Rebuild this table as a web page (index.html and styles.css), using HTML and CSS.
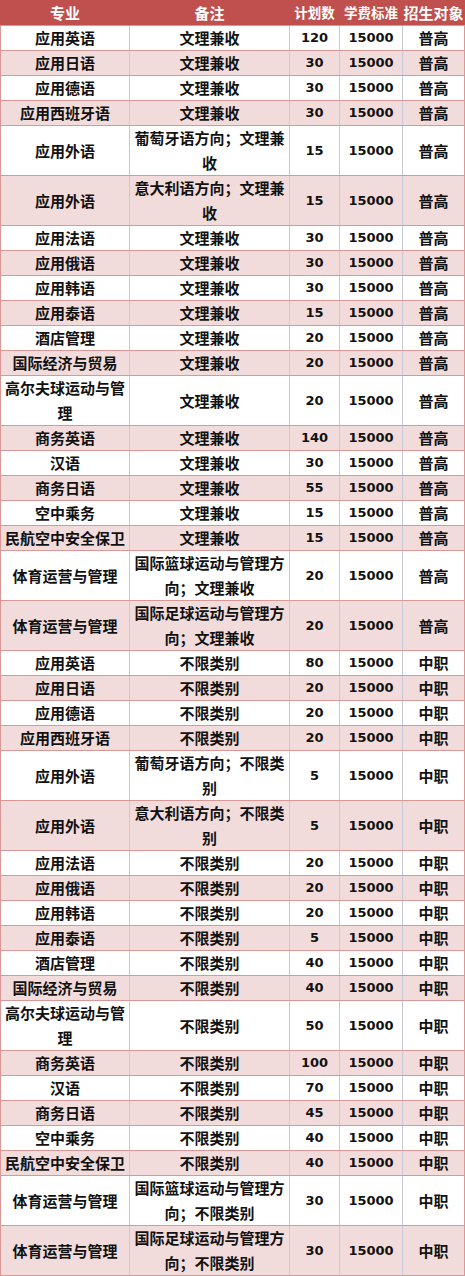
FILE: index.html
```html
<!DOCTYPE html>
<html lang="zh-CN">
<head>
<meta charset="utf-8">
<title>招生计划</title>
<link rel="stylesheet" href="styles.css">
</head>
<body>
<div class="table">
  <div class="row head">
    <div class="c">专业</div>
    <div class="c">备注</div>
    <div class="c narrow">计划数</div>
    <div class="c narrow">学费标准</div>
    <div class="c">招生对象</div>
  </div>
  <div class="rows">
    <div class="row"><div class="c">应用英语</div><div class="c">文理兼收</div><div class="c n">120</div><div class="c n">15000</div><div class="c">普高</div></div>
    <div class="row"><div class="c">应用日语</div><div class="c">文理兼收</div><div class="c n">30</div><div class="c n">15000</div><div class="c">普高</div></div>
    <div class="row"><div class="c">应用德语</div><div class="c">文理兼收</div><div class="c n">30</div><div class="c n">15000</div><div class="c">普高</div></div>
    <div class="row"><div class="c">应用西班牙语</div><div class="c">文理兼收</div><div class="c n">30</div><div class="c n">15000</div><div class="c">普高</div></div>
    <div class="row"><div class="c">应用外语</div><div class="c w">葡萄牙语方向；文理兼收</div><div class="c n">15</div><div class="c n">15000</div><div class="c">普高</div></div>
    <div class="row"><div class="c">应用外语</div><div class="c w">意大利语方向；文理兼收</div><div class="c n">15</div><div class="c n">15000</div><div class="c">普高</div></div>
    <div class="row"><div class="c">应用法语</div><div class="c">文理兼收</div><div class="c n">30</div><div class="c n">15000</div><div class="c">普高</div></div>
    <div class="row"><div class="c">应用俄语</div><div class="c">文理兼收</div><div class="c n">30</div><div class="c n">15000</div><div class="c">普高</div></div>
    <div class="row"><div class="c">应用韩语</div><div class="c">文理兼收</div><div class="c n">30</div><div class="c n">15000</div><div class="c">普高</div></div>
    <div class="row"><div class="c">应用泰语</div><div class="c">文理兼收</div><div class="c n">15</div><div class="c n">15000</div><div class="c">普高</div></div>
    <div class="row"><div class="c">酒店管理</div><div class="c">文理兼收</div><div class="c n">20</div><div class="c n">15000</div><div class="c">普高</div></div>
    <div class="row"><div class="c">国际经济与贸易</div><div class="c">文理兼收</div><div class="c n">20</div><div class="c n">15000</div><div class="c">普高</div></div>
    <div class="row"><div class="c w">高尔夫球运动与管理</div><div class="c">文理兼收</div><div class="c n">20</div><div class="c n">15000</div><div class="c">普高</div></div>
    <div class="row"><div class="c">商务英语</div><div class="c">文理兼收</div><div class="c n">140</div><div class="c n">15000</div><div class="c">普高</div></div>
    <div class="row"><div class="c">汉语</div><div class="c">文理兼收</div><div class="c n">30</div><div class="c n">15000</div><div class="c">普高</div></div>
    <div class="row"><div class="c">商务日语</div><div class="c">文理兼收</div><div class="c n">55</div><div class="c n">15000</div><div class="c">普高</div></div>
    <div class="row"><div class="c">空中乘务</div><div class="c">文理兼收</div><div class="c n">15</div><div class="c n">15000</div><div class="c">普高</div></div>
    <div class="row"><div class="c">民航空中安全保卫</div><div class="c">文理兼收</div><div class="c n">15</div><div class="c n">15000</div><div class="c">普高</div></div>
    <div class="row"><div class="c">体育运营与管理</div><div class="c w">国际篮球运动与管理方向；文理兼收</div><div class="c n">20</div><div class="c n">15000</div><div class="c">普高</div></div>
    <div class="row"><div class="c">体育运营与管理</div><div class="c w">国际足球运动与管理方向；文理兼收</div><div class="c n">20</div><div class="c n">15000</div><div class="c">普高</div></div>
    <div class="row"><div class="c">应用英语</div><div class="c">不限类别</div><div class="c n">80</div><div class="c n">15000</div><div class="c">中职</div></div>
    <div class="row"><div class="c">应用日语</div><div class="c">不限类别</div><div class="c n">20</div><div class="c n">15000</div><div class="c">中职</div></div>
    <div class="row"><div class="c">应用德语</div><div class="c">不限类别</div><div class="c n">20</div><div class="c n">15000</div><div class="c">中职</div></div>
    <div class="row"><div class="c">应用西班牙语</div><div class="c">不限类别</div><div class="c n">20</div><div class="c n">15000</div><div class="c">中职</div></div>
    <div class="row"><div class="c">应用外语</div><div class="c w">葡萄牙语方向；不限类别</div><div class="c n">5</div><div class="c n">15000</div><div class="c">中职</div></div>
    <div class="row"><div class="c">应用外语</div><div class="c w">意大利语方向；不限类别</div><div class="c n">5</div><div class="c n">15000</div><div class="c">中职</div></div>
    <div class="row"><div class="c">应用法语</div><div class="c">不限类别</div><div class="c n">20</div><div class="c n">15000</div><div class="c">中职</div></div>
    <div class="row"><div class="c">应用俄语</div><div class="c">不限类别</div><div class="c n">20</div><div class="c n">15000</div><div class="c">中职</div></div>
    <div class="row"><div class="c">应用韩语</div><div class="c">不限类别</div><div class="c n">20</div><div class="c n">15000</div><div class="c">中职</div></div>
    <div class="row"><div class="c">应用泰语</div><div class="c">不限类别</div><div class="c n">5</div><div class="c n">15000</div><div class="c">中职</div></div>
    <div class="row"><div class="c">酒店管理</div><div class="c">不限类别</div><div class="c n">40</div><div class="c n">15000</div><div class="c">中职</div></div>
    <div class="row"><div class="c">国际经济与贸易</div><div class="c">不限类别</div><div class="c n">40</div><div class="c n">15000</div><div class="c">中职</div></div>
    <div class="row"><div class="c w">高尔夫球运动与管理</div><div class="c">不限类别</div><div class="c n">50</div><div class="c n">15000</div><div class="c">中职</div></div>
    <div class="row"><div class="c">商务英语</div><div class="c">不限类别</div><div class="c n">100</div><div class="c n">15000</div><div class="c">中职</div></div>
    <div class="row"><div class="c">汉语</div><div class="c">不限类别</div><div class="c n">70</div><div class="c n">15000</div><div class="c">中职</div></div>
    <div class="row"><div class="c">商务日语</div><div class="c">不限类别</div><div class="c n">45</div><div class="c n">15000</div><div class="c">中职</div></div>
    <div class="row"><div class="c">空中乘务</div><div class="c">不限类别</div><div class="c n">40</div><div class="c n">15000</div><div class="c">中职</div></div>
    <div class="row"><div class="c">民航空中安全保卫</div><div class="c">不限类别</div><div class="c n">40</div><div class="c n">15000</div><div class="c">中职</div></div>
    <div class="row"><div class="c">体育运营与管理</div><div class="c w">国际篮球运动与管理方向；不限类别</div><div class="c n">30</div><div class="c n">15000</div><div class="c">中职</div></div>
    <div class="row"><div class="c">体育运营与管理</div><div class="c w">国际足球运动与管理方向；不限类别</div><div class="c n">30</div><div class="c n">15000</div><div class="c">中职</div></div>
  </div>
</div>
</body>
</html>
```

FILE: styles.css
```css
* { box-sizing: border-box; }
html, body { margin: 0; padding: 0; background: #ffffff; }
body {
  font-family: "Noto Sans CJK SC", "Noto Sans", sans-serif;
  font-size: 15px;
  font-weight: 700;
  color: #111111;
  width: 465px;
}
.table {
  width: 465px;
  border-bottom: 1px solid #d99795;
}
.row {
  display: grid;
  grid-template-columns: 128px 160px 50px 63px 62px;
  border-left: 1px solid #d99795;
  border-right: 1px solid #d99795;
  border-top: 1px solid #d99795;
  background: #ffffff;
}
.rows .row:nth-child(even) { background: #f2dcdb; }
.c {
  display: flex;
  align-items: center;
  justify-content: center;
  text-align: center;
  line-height: 24px;
  padding: 0 2px;
  border-left: 1px solid #c3cadb;
  min-width: 0;
}
.c:first-child { border-left: none; }
.c.w { line-height: 24.5px; padding: 0 2px; }
.c.n {
  font-family: "DejaVu Sans", "Noto Sans", sans-serif;
  font-size: 13px;
  font-weight: 700;
  padding: 0;
}
.head {
  background: #c0504d;
  border: none;
  border-left: 1px solid #c0504d;
  border-right: 1px solid #c0504d;
  color: #ffffff;
  height: 25px;
}
.head .c {
  border-left-color: #c0504d;
  line-height: 25px;
  padding: 0;
  white-space: nowrap;
}
.head .c.narrow { font-size: 13.5px; }
```
